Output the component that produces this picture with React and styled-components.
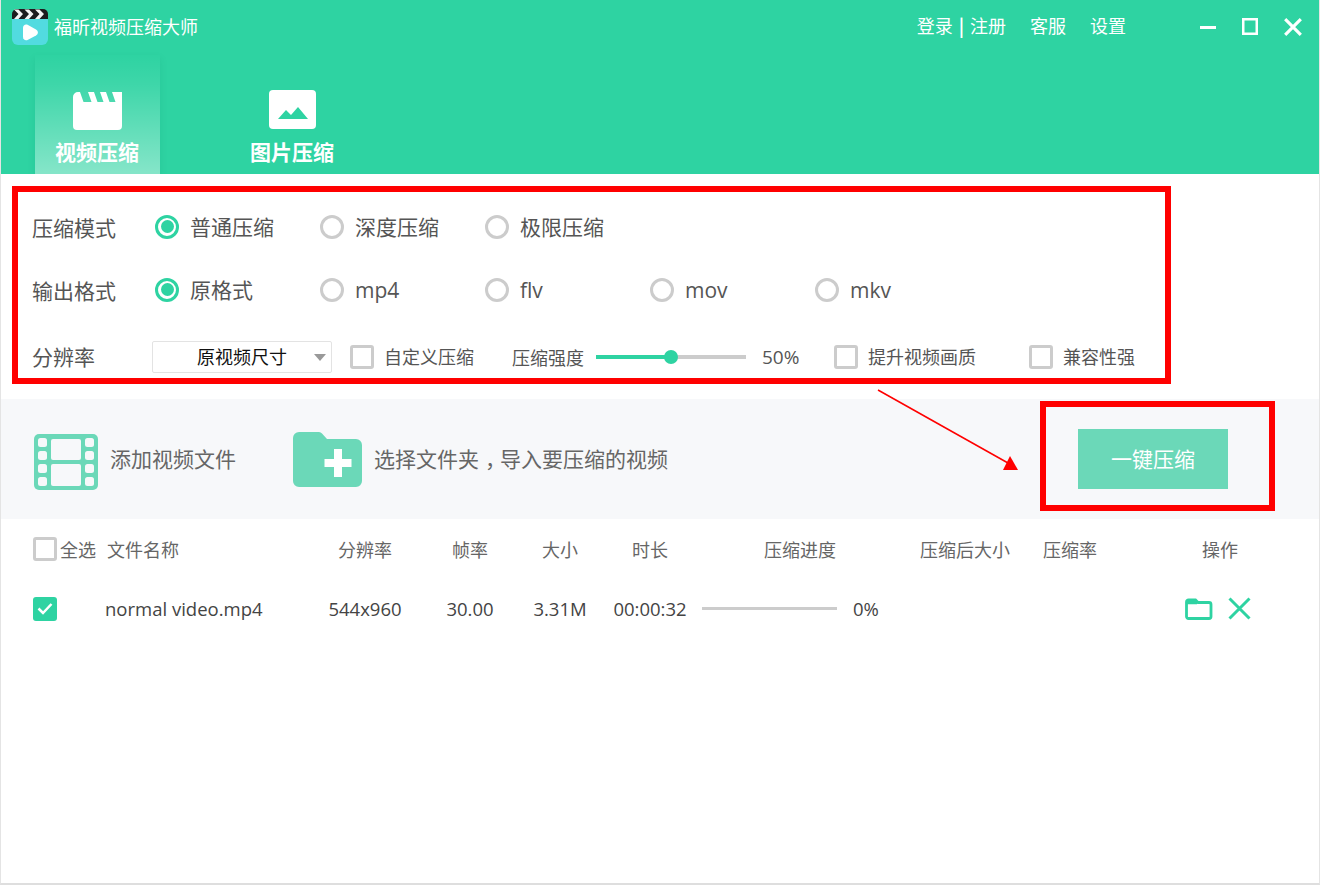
import React from "react";
import styled, { createGlobalStyle } from "styled-components";

const GREEN = "#2ed3a2";
const SOFT = "#6bd8b8";
const CJK = `"Noto Sans CJK SC", "Open Sans", sans-serif`;

const Global = createGlobalStyle`
  html, body {
    margin: 0;
    padding: 0;
    background: #fff;
  }
  * {
    box-sizing: border-box;
  }
`;

const Page = styled.div`
  position: relative;
  width: 1320px;
  height: 885px;
  overflow: hidden;
  font-family: "Open Sans", ${CJK};
  color: #555;
  background: #fff;
  border-left: 1px solid #e4e4e4;
  border-right: 1px solid #e4e4e4;
  border-bottom: 2px solid #dedede;
`;

const Header = styled.header`
  height: 174px;
  margin: 0 -1px;
  overflow: hidden;
  background: ${GREEN};
  color: #fff;
`;

const TitleBar = styled.div`
  display: flex;
  align-items: flex-start;
  height: 55px;
  padding: 9px 18px 0 12px;
`;

const AppName = styled.div`
  margin-left: 6px;
  font-family: ${CJK};
  font-size: 18px;
  line-height: 35px;
`;

const Menu = styled.nav`
  display: flex;
  gap: 24px;
  margin-left: auto;
  margin-right: 74px;
  font-family: ${CJK};
  font-size: 18px;
  line-height: 33px;
`;

const Sep = styled.span`
  margin: 0 6px;
  font-weight: 700;
`;

const WinControls = styled.div`
  display: flex;
  gap: 26px;
  margin-top: 9px;
`;

const Tabs = styled.div`
  display: flex;
  gap: 70px;
  padding-left: 35px;
`;

const Tab = styled.div`
  width: 125px;
  height: 119px;
  display: flex;
  flex-direction: column;
  align-items: center;
  padding-top: ${(p) => (p.$active ? "37px" : "35px")};
  background: ${(p) =>
    p.$active
      ? "linear-gradient(to bottom, rgba(255,255,255,0) 0%, rgba(255,255,255,0.08) 25%, rgba(255,255,255,0.42) 100%)"
      : "none"};
  box-shadow: ${(p) => (p.$active ? "0 4px 6px rgba(30,170,130,0.3)" : "none")};
`;

const TabLabel = styled.div`
  margin-top: ${(p) => (p.$active ? "8px" : "9px")};
  margin-left: -1px;
  font-family: ${CJK};
  font-size: 21px;
  font-weight: 700;
  line-height: 26px;
  white-space: nowrap;
`;

const Options = styled.section`
  height: 225px;
  padding: 21px 0 0 31px;
`;

const OptionRow = styled.div`
  display: flex;
  align-items: center;
  height: 63px;
`;

const RowLabel = styled.div`
  width: 123px;
  font-family: ${CJK};
  font-size: 21px;
  line-height: 28px;
  flex: none;
`;

const Radio = styled.label`
  width: 165px;
  display: flex;
  align-items: center;
  gap: 11px;
  font-size: 21px;
  line-height: 28px;
  flex: none;
`;

const RadioDot = styled.span`
  position: relative;
  width: 24px;
  height: 24px;
  border-radius: 50%;
  border: 3px solid ${(p) => (p.$on ? GREEN : "#ccc")};
  background: #fff;
  flex: none;
  &::after {
    content: "";
    display: ${(p) => (p.$on ? "block" : "none")};
    position: absolute;
    inset: 2.5px;
    border-radius: 50%;
    background: ${GREEN};
  }
`;

const SettingsRow = styled.div`
  display: flex;
  align-items: center;
  height: 63px;
  margin-top: 4px;
  font-size: 18px;
  line-height: 24px;
  white-space: nowrap;
`;

const ShortLabel = styled(RowLabel)`
  width: 120px;
  margin-bottom: 2px;
`;

const Select = styled.div`
  position: relative;
  width: 180px;
  height: 32px;
  padding-left: 44px;
  border: 1px solid #e3e3e3;
  border-radius: 2px;
  color: #111;
  font-family: ${CJK};
  line-height: 29px;
  flex: none;
  &::after {
    content: "";
    position: absolute;
    right: 5px;
    top: 12px;
    border-left: 6px solid transparent;
    border-right: 6px solid transparent;
    border-top: 7px solid #999;
  }
`;

const Box = styled.span`
  display: inline-flex;
  align-items: center;
  justify-content: center;
  width: 24px;
  height: 24px;
  border-radius: 3px;
  border: ${(p) => (p.$on ? "none" : "3px solid #ccc")};
  background: ${(p) => (p.$on ? GREEN : "#fff")};
  flex: none;
`;

const CheckItem = styled.label`
  display: flex;
  align-items: center;
  gap: ${(p) => p.$gap || 10}px;
  margin-left: ${(p) => p.$left}px;
  flex: none;
`;

const SliderLabel = styled.span`
  margin-left: 38px;
  font-family: ${CJK};
`;

const Track = styled.div`
  position: relative;
  width: 150px;
  height: 4px;
  margin-left: 12px;
  background: #ccc;
  flex: none;
`;

const Fill = styled.div`
  height: 100%;
  background: ${GREEN};
`;

const Thumb = styled.span`
  position: absolute;
  top: -5px;
  width: 14px;
  height: 14px;
  margin-left: -7px;
  border-radius: 50%;
  background: ${GREEN};
`;

const Percent = styled.span`
  margin-left: 16px;
  width: 38px;
  font-size: 19px;
`;

const Toolbar = styled.section`
  display: flex;
  align-items: center;
  height: 120px;
  padding-left: 33px;
  background: #f7f8fa;
  font-family: ${CJK};
  font-size: 21px;
  color: #666;
`;

const ToolAction = styled.div`
  display: flex;
  align-items: center;
  gap: ${(p) => p.$gap}px;
  margin-right: ${(p) => p.$right || 0}px;
  padding-bottom: 2px;
  white-space: nowrap;
`;

// 逗号在原图里居中，这里往右挪一点
const Comma = styled.span`
  display: inline-block;
  padding-left: 6px;
  letter-spacing: -6px;
`;

const StartButton = styled.button`
  width: 150px;
  height: 60px;
  margin-left: auto;
  margin-right: 91px;
  padding: 0 0 2px;
  border: 0;
  background: ${SOFT};
  color: #fff;
  font-family: ${CJK};
  font-size: 21px;
`;

const TableGrid = styled.div`
  display: grid;
  grid-template-columns: 72px 195px 130px 80px 100px 80px 220px 110px 100px 200px;
  align-items: center;
  padding-left: 32px;
  text-align: center;
  white-space: nowrap;
`;

const TableHead = styled(TableGrid)`
  height: 60px;
  font-family: ${CJK};
  font-size: 18px;
  color: #666;
`;

const TableRow = styled(TableGrid)`
  height: 60px;
  padding-bottom: 1px;
  font-size: 18.5px;
  color: #444;
`;

const SelectAll = styled.div`
  display: flex;
  align-items: center;
  gap: 3px;
`;

const NameCell = styled.div`
  text-align: left;
  padding-left: ${(p) => p.$pad}px;
`;

const ProgressCell = styled.div`
  display: flex;
  align-items: center;
  gap: 16px;
  padding-left: 12px;
`;

const Bar = styled.div`
  width: 135px;
  height: 3px;
  background: #ccc;
`;

const Actions = styled.div`
  display: flex;
  justify-content: center;
  align-items: center;
  gap: 15px;
  padding-right: 5px;
`;

// 标注框，盖在界面上面
const RedFrame = styled.div`
  position: absolute;
  left: ${(p) => p.$x}px;
  top: ${(p) => p.$y}px;
  width: ${(p) => p.$w}px;
  height: ${(p) => p.$h}px;
  border: 6px solid #f00;
  pointer-events: none;
`;

const ArrowLayer = styled.svg`
  position: absolute;
  left: -1px;
  top: 0;
  pointer-events: none;
`;

const FilmSvg = styled.svg`
  margin-top: 8px;
  flex: none;
`;

const FolderSvg = styled.svg`
  margin-top: 2px;
  flex: none;
`;

const Logo = () => (
  <svg width="36" height="36" viewBox="0 0 36 36">
    <path d="M0 9h36v21a6 6 0 0 1-6 6H6a6 6 0 0 1-6-6z" fill="#52dbe0" />
    <path d="M5 0h26a5 5 0 0 1 5 5v5H0V5a5 5 0 0 1 5-5z" fill="#1c1c1e" />
    <path
      d="M2 0.500h4.500l4.500 4.500-4.500 5H2l4.500-5zM12.500 0.500H17l4.500 4.500-4.500 5h-4.500l4.500-5zM23 0.500h4.500l4.500 4.500-4.500 5H23l4.500-5z"
      fill="#f4f4f4"
    />
    <path
      d="M11 19c0-3 2.500-4.300 5-3l8 4.500c2.500 1.500 2.500 4.500 0 6l-8 4.300c-2.500 1.300-5 0-5-3z"
      fill="#fff"
    />
  </svg>
);

const ClapIcon = () => (
  <svg width="49" height="38" viewBox="0 0 49 38" fill="#fff">
    <path d="M0 5a5 5 0 0 1 5-5h2l3.500 10h8L15 0h6l3.500 10h6L27 0h6l3.500 10h6L39 0h10v34a4 4 0 0 1-4 4H4a4 4 0 0 1-4-4z" />
  </svg>
);

const PictureIcon = () => (
  <svg width="47" height="39" viewBox="0 0 47 39">
    <rect width="47" height="39" rx="4" fill="#fff" />
    <path d="M9 29l8-9 5 5 7-8 10 12z" fill={GREEN} />
  </svg>
);

const FilmIcon = () => (
  <FilmSvg width="64" height="56" viewBox="0 0 64 56">
    <rect width="64" height="56" rx="5" fill={SOFT} />
    {[4, 17, 30, 43].map((y) => (
      <g key={y} fill="#f7f8fa">
        <rect x="4" y={y} width="9" height="9" rx="2.500" />
        <rect x="51" y={y} width="9" height="9" rx="2.500" />
      </g>
    ))}
    <rect x="17" y="5" width="30" height="21" rx="2" fill="#f7f8fa" />
    <rect x="17" y="30" width="30" height="22" rx="2" fill="#f7f8fa" />
  </FilmSvg>
);

const FolderPlusIcon = () => (
  <FolderSvg width="69" height="55" viewBox="0 0 69 55">
    <path
      d="M0 6a6 6 0 0 1 6-6h20a4 4 0 0 1 3 1.500L34 7h29a6 6 0 0 1 6 6v36a6 6 0 0 1-6 6H6a6 6 0 0 1-6-6z"
      fill={SOFT}
    />
    <path d="M41 17h8v10h9.500v8H49v10h-8V35h-9.500v-8H41z" fill="#fff" />
  </FolderSvg>
);

const FolderIcon = () => (
  <svg width="28" height="22" viewBox="0 0 28 22" fill="none" stroke={GREEN} strokeWidth="2.800">
    <path d="M1.500 4a2 2 0 0 1 2-2h7l2.500 2.500h11a2 2 0 0 1 2 2V18.500a2 2 0 0 1-2 2h-20.500a2 2 0 0 1-2-2z" />
    <path d="M2 4.500h10" strokeWidth="3.500" />
  </svg>
);

const CrossIcon = ({ size = 23, color = GREEN, width = 3 }) => (
  <svg width={size} height={size} viewBox="0 0 23 23" stroke={color} strokeWidth={width}>
    <path d="M1.500 1.500l20 20M21.500 1.500l-20 20" />
  </svg>
);

const Tick = () => (
  <svg width="16" height="13" viewBox="0 0 16 13" fill="none" stroke="#fff" strokeWidth="2.500">
    <path d="M1.500 6.500l4.500 4.500 8.500-9" />
  </svg>
);

const modes = ["普通压缩", "深度压缩", "极限压缩"];
const formats = ["原格式", "mp4", "flv", "mov", "mkv"];
const columns = ["分辨率", "帧率", "大小", "时长", "压缩进度", "压缩后大小", "压缩率", "操作"];

function RadioGroup({ items }) {
  return items.map((item, i) => (
    <Radio key={item}>
      <RadioDot $on={i === 0} />
      {item}
    </Radio>
  ));
}

export default function App() {
  return (
    <Page>
      <Global />
      <Header>
        <TitleBar>
          <Logo />
          <AppName>福昕视频压缩大师</AppName>
          <Menu>
            <span>
              登录<Sep>|</Sep>注册
            </span>
            <span>客服</span>
            <span>设置</span>
          </Menu>
          <WinControls>
            <svg width="16" height="18" viewBox="0 0 16 18" fill="#fff">
              <rect y="8" width="16" height="3" />
            </svg>
            <svg width="16" height="18" viewBox="0 0 16 18" fill="none" stroke="#fff" strokeWidth="2.500">
              <rect x="1.250" y="1.250" width="13.500" height="14.500" />
            </svg>
            <CrossIcon size={18} color="#fff" width={4} />
          </WinControls>
        </TitleBar>
        <Tabs>
          <Tab $active>
            <ClapIcon />
            <TabLabel $active>视频压缩</TabLabel>
          </Tab>
          <Tab>
            <PictureIcon />
            <TabLabel>图片压缩</TabLabel>
          </Tab>
        </Tabs>
      </Header>

      <Options>
        <OptionRow>
          <RowLabel>压缩模式</RowLabel>
          <RadioGroup items={modes} />
        </OptionRow>
        <OptionRow>
          <RowLabel>输出格式</RowLabel>
          <RadioGroup items={formats} />
        </OptionRow>
        <SettingsRow>
          <ShortLabel>分辨率</ShortLabel>
          <Select>原视频尺寸</Select>
          <CheckItem $left={18}>
            <Box />
            自定义压缩
          </CheckItem>
          <SliderLabel>压缩强度</SliderLabel>
          <Track>
            <Fill style={{ width: "50%" }} />
            <Thumb style={{ left: "50%" }} />
          </Track>
          <Percent>50%</Percent>
          <CheckItem $left={34}>
            <Box />
            提升视频画质
          </CheckItem>
          <CheckItem $left={53}>
            <Box />
            兼容性强
          </CheckItem>
        </SettingsRow>
      </Options>

      <Toolbar>
        <ToolAction $gap={12} $right={57}>
          <FilmIcon />
          添加视频文件
        </ToolAction>
        <ToolAction $gap={12}>
          <FolderPlusIcon />
          <span>
            选择文件夹<Comma>，</Comma>导入要压缩的视频
          </span>
        </ToolAction>
        <StartButton>一键压缩</StartButton>
      </Toolbar>

      <TableHead>
        <SelectAll>
          <Box />
          全选
        </SelectAll>
        <NameCell $pad={2}>文件名称</NameCell>
        {columns.map((c) => (
          <div key={c}>{c}</div>
        ))}
      </TableHead>
      <TableRow>
        <Box $on>
          <Tick />
        </Box>
        <NameCell $pad={0}>normal video.mp4</NameCell>
        <div>544x960</div>
        <div>30.00</div>
        <div>3.31M</div>
        <div>00:00:32</div>
        <ProgressCell>
          <Bar />
          0%
        </ProgressCell>
        <div />
        <div />
        <Actions>
          <FolderIcon />
          <CrossIcon />
        </Actions>
      </TableRow>

      <RedFrame $x={11} $y={186} $w={1159} $h={198} />
      <RedFrame $x={1039} $y={401} $w={235} $h={110} />
      <ArrowLayer width="1320" height="885">
        <path d="M878 390L1008 463" stroke="#f00" strokeWidth="1.500" />
        <path d="M1010 456L1018 470L1003 470z" fill="#f00" />
      </ArrowLayer>
    </Page>
  );
}
